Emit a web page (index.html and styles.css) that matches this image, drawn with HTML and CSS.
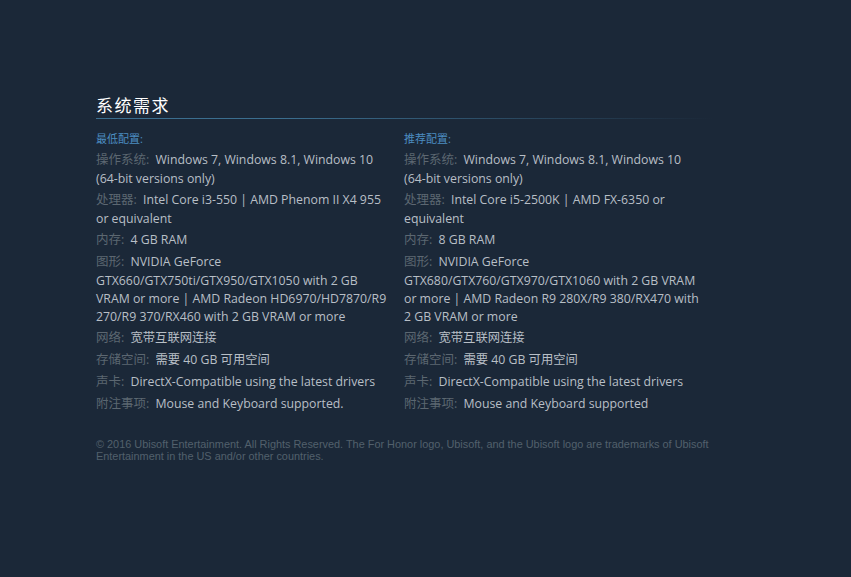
FILE: index.html
```html
<!DOCTYPE html>
<html lang="zh-CN">
<head>
<meta charset="utf-8">
<link rel="stylesheet" href="styles.css">
</head>
<body>
<div class="sysreq">
  <h2 class="title">系统需求</h2>
  <div class="cols">
    <div class="col">
      <div class="coltitle">最低配置:</div>
      <ul>
        <li><span class="lbl">操作系统:</span> Windows 7, Windows 8.1, Windows 10 (64-bit versions only)</li>
        <li><span class="lbl">处理器:</span> Intel Core i3-550 | AMD Phenom II X4 955 or equivalent</li>
        <li><span class="lbl">内存:</span> 4 GB RAM</li>
        <li><span class="lbl">图形:</span> NVIDIA GeForce GTX660/GTX750ti/GTX950/GTX1050 with 2 GB VRAM or more | AMD Radeon HD6970/HD7870/R9 270/R9 370/RX460 with 2 GB VRAM or more</li>
        <li><span class="lbl">网络:</span> 宽带互联网连接</li>
        <li><span class="lbl">存储空间:</span> 需要 40 GB 可用空间</li>
        <li><span class="lbl">声卡:</span> DirectX-Compatible using the latest drivers</li>
        <li><span class="lbl">附注事项:</span> Mouse and Keyboard supported.</li>
      </ul>
    </div>
    <div class="col">
      <div class="coltitle">推荐配置:</div>
      <ul>
        <li><span class="lbl">操作系统:</span> Windows 7, Windows 8.1, Windows 10 (64-bit versions only)</li>
        <li><span class="lbl">处理器:</span> Intel Core i5-2500K | AMD FX-6350 or equivalent</li>
        <li><span class="lbl">内存:</span> 8 GB RAM</li>
        <li><span class="lbl">图形:</span> NVIDIA GeForce GTX680/GTX760/GTX970/GTX1060 with 2 GB VRAM or more | AMD Radeon R9 280X/R9 380/RX470 with 2 GB VRAM or more</li>
        <li><span class="lbl">网络:</span> 宽带互联网连接</li>
        <li><span class="lbl">存储空间:</span> 需要 40 GB 可用空间</li>
        <li><span class="lbl">声卡:</span> DirectX-Compatible using the latest drivers</li>
        <li><span class="lbl">附注事项:</span> Mouse and Keyboard supported</li>
      </ul>
    </div>
  </div>
  <p class="legal">© 2016 Ubisoft Entertainment. All Rights Reserved. The For Honor logo, Ubisoft, and the Ubisoft logo are trademarks of Ubisoft Entertainment in the US and/or other countries.</p>
</div>
</body>
</html>
```
FILE: styles.css
```css
html, body {
  margin: 0;
  padding: 0;
  background: #1b2838;
  height: 100%;
}
body {
  font-family: "Open Sans", "Noto Sans CJK SC", sans-serif;
  color: #b4bbc2;
}
.sysreq {
  width: 616px;
  margin-left: 96px;
  padding-top: 94px;
}
.title {
  margin: 0 0 10px 0;
  font-size: 17px;
  font-weight: normal;
  line-height: 24px;
  color: #ffffff;
  letter-spacing: 1.5px;
  border-bottom: 1px solid transparent;
  border-image: linear-gradient(to right, #3b6e8f 0%, #3b6e8f 30%, rgba(59,110,143,0) 100%) 1;
}
.cols {
  display: flex;
  padding-top: 1px;
}
.col {
  width: 297px;
  margin-right: 11px;
}
.coltitle {
  font-size: 11px;
  line-height: 18px;
  color: #4c8dc1;
  margin-bottom: 2px;
}
ul {
  list-style: none;
  margin: 0;
  padding: 0;
}
li {
  font-size: 12.3px;
  line-height: 18px;
  margin-bottom: 2px;
  color: #b8bfc6;
}
.lbl {
  font-size: 12.5px;
  line-height: 20px;
  margin-right: 3px;
  color: #5c6771;
}
.legal {
  width: 622px;
  margin: 22px 0 0 0;
  font-family: "Liberation Sans", Arial, sans-serif;
  font-size: 10.9px;
  line-height: 12px;
  color: #52606c;
}
```
